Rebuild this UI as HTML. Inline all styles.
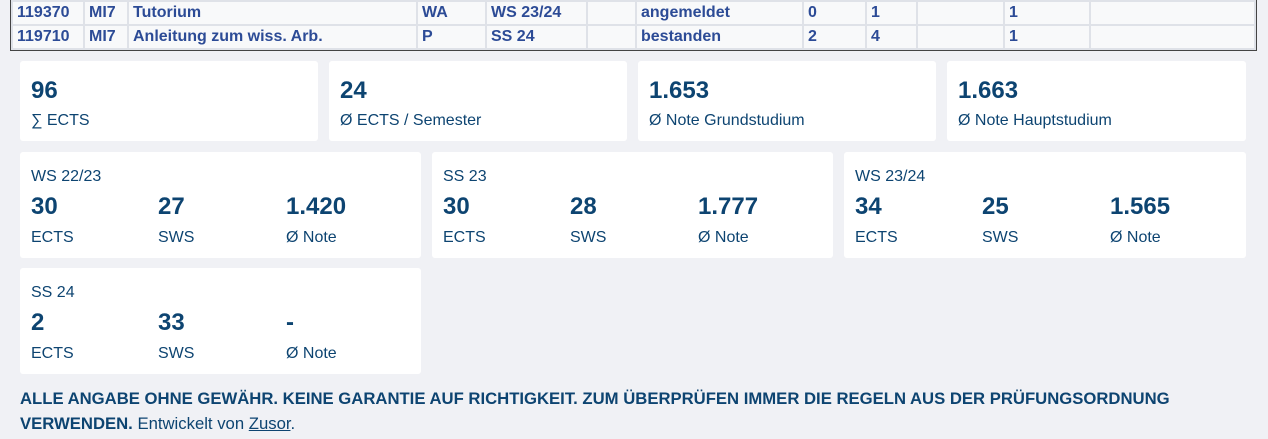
<!DOCTYPE html>
<html><head><meta charset="utf-8"><style>
body{margin:0;width:1268px;height:439px;background:#f0f1f5;font-family:"Liberation Sans",sans-serif;overflow:hidden;position:relative}
table{position:absolute;left:10px;top:0;width:1247px;table-layout:fixed;border-collapse:separate;border-spacing:2px;background:#dfe2e8;border:1px solid #444;border-top:none;font-weight:bold;font-size:16px;color:#2c4b96}
td{background:#f8f9fa;height:22px;padding:0 4px;white-space:nowrap;overflow:hidden}
.card{position:absolute;background:#fff;border-radius:3px;color:#0d4471}
.v{font-weight:bold;font-size:24px;position:absolute}
.l{font-size:16px;position:absolute}
.h{font-size:16px;position:absolute;left:11px;top:16px}
.foot{position:absolute;left:20px;top:386px;width:1240px;font-size:16.7px;line-height:25px;color:#0d4471}
.foot b{font-weight:bold}
</style></head><body>
<table>
<colgroup><col style="width:70px"><col style="width:42px"><col style="width:287px"><col style="width:67px"><col style="width:99px"><col style="width:47px"><col style="width:165px"><col style="width:61px"><col style="width:49px"><col style="width:85px"><col style="width:84px"><col></colgroup>
<tr><td>119370</td><td>MI7</td><td>Tutorium</td><td>WA</td><td>WS 23/24</td><td></td><td>angemeldet</td><td>0</td><td>1</td><td></td><td>1</td><td></td></tr>
<tr><td>119710</td><td>MI7</td><td>Anleitung zum wiss. Arb.</td><td>P</td><td>SS 24</td><td></td><td>bestanden</td><td>2</td><td>4</td><td></td><td>1</td><td></td></tr>
</table>

<div class="card" style="left:20px;top:61px;width:298px;height:80px"><div class="v" style="left:11px;top:16px">96</div><div class="l" style="left:11px;top:51px">∑ ECTS</div></div>
<div class="card" style="left:329px;top:61px;width:298px;height:80px"><div class="v" style="left:11px;top:16px">24</div><div class="l" style="left:11px;top:51px">Ø ECTS / Semester</div></div>
<div class="card" style="left:638px;top:61px;width:298px;height:80px"><div class="v" style="left:11px;top:16px">1.653</div><div class="l" style="left:11px;top:51px">Ø Note Grundstudium</div></div>
<div class="card" style="left:947px;top:61px;width:299px;height:80px"><div class="v" style="left:11px;top:16px">1.663</div><div class="l" style="left:11px;top:51px">Ø Note Hauptstudium</div></div>

<div class="card" style="left:20px;top:152px;width:401px;height:106px"><div class="h">WS 22/23</div>
<div class="v" style="left:11px;top:41px">30</div><div class="l" style="left:11px;top:77px">ECTS</div>
<div class="v" style="left:138px;top:41px">27</div><div class="l" style="left:138px;top:77px">SWS</div>
<div class="v" style="left:266px;top:41px">1.420</div><div class="l" style="left:266px;top:77px">Ø Note</div></div>
<div class="card" style="left:432px;top:152px;width:401px;height:106px"><div class="h">SS 23</div>
<div class="v" style="left:11px;top:41px">30</div><div class="l" style="left:11px;top:77px">ECTS</div>
<div class="v" style="left:138px;top:41px">28</div><div class="l" style="left:138px;top:77px">SWS</div>
<div class="v" style="left:266px;top:41px">1.777</div><div class="l" style="left:266px;top:77px">Ø Note</div></div>
<div class="card" style="left:844px;top:152px;width:402px;height:106px"><div class="h">WS 23/24</div>
<div class="v" style="left:11px;top:41px">34</div><div class="l" style="left:11px;top:77px">ECTS</div>
<div class="v" style="left:138px;top:41px">25</div><div class="l" style="left:138px;top:77px">SWS</div>
<div class="v" style="left:266px;top:41px">1.565</div><div class="l" style="left:266px;top:77px">Ø Note</div></div>
<div class="card" style="left:20px;top:268px;width:401px;height:106px"><div class="h">SS 24</div>
<div class="v" style="left:11px;top:41px">2</div><div class="l" style="left:11px;top:77px">ECTS</div>
<div class="v" style="left:138px;top:41px">33</div><div class="l" style="left:138px;top:77px">SWS</div>
<div class="v" style="left:266px;top:41px">-</div><div class="l" style="left:266px;top:77px">Ø Note</div></div>

<div class="foot"><b>ALLE ANGABE OHNE GEWÄHR. KEINE GARANTIE AUF RICHTIGKEIT. ZUM ÜBERPRÜFEN IMMER DIE REGELN AUS DER PRÜFUNGSORDNUNG VERWENDEN.</b> Entwickelt von <u>Zusor</u>.</div>
</body></html>
